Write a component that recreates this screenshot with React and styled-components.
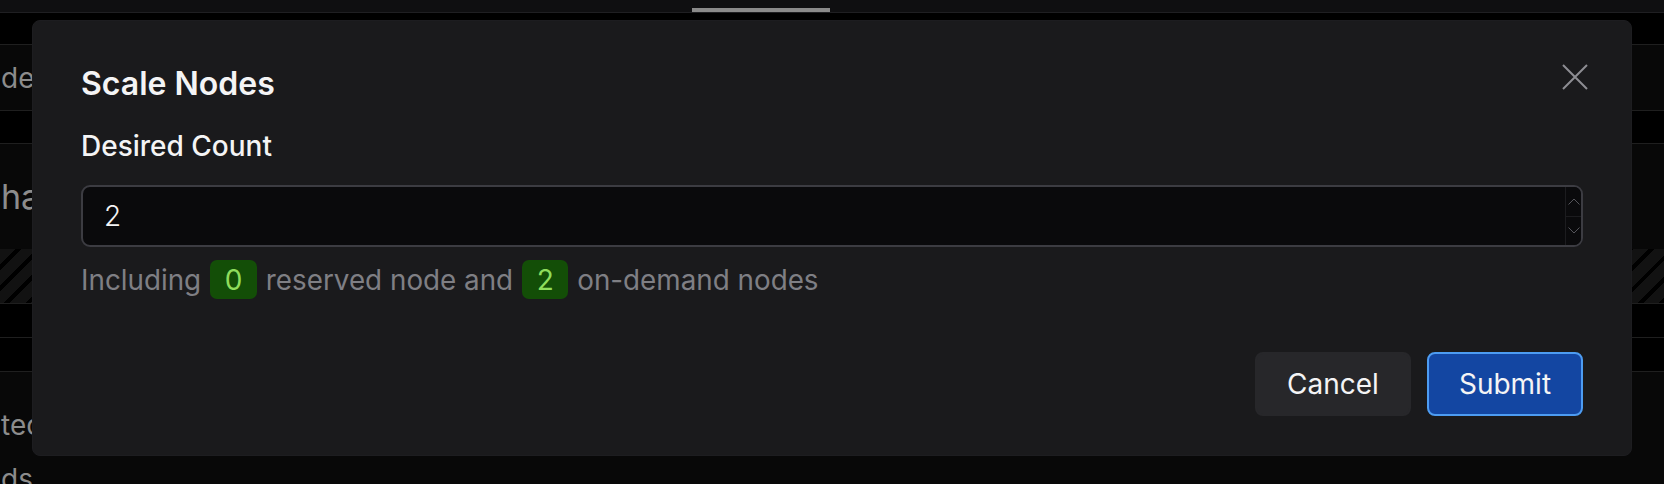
import React, { useState, useEffect, useRef } from 'react';
import styled, { createGlobalStyle } from 'styled-components';

const GlobalStyle = createGlobalStyle`
  * { box-sizing: border-box; }
  html, body {
    margin: 0;
    padding: 0;
    background: #000;
    font-family: Inter, "Noto Sans", "Liberation Sans", sans-serif;
    overflow: hidden;
  }
`;

const Page = styled.div`
  position: relative;
  width: 1664px;
  height: 484px;
  overflow: hidden;
  background: #000;
  display: flex;
  flex-direction: column;
`;

const TopBar = styled.div`
  height: 13px;
  flex: none;
  background: #0f0f11;
  border-bottom: 1px solid #1f1f22;
  display: flex;
  align-items: flex-end;
  padding-left: 692px;
`;

const Handle = styled.div`
  width: 138px;
  height: 4px;
  background: #8a8a8a;
`;

const Row = styled.div`
  flex: none;
  height: ${(p) => p.$h}px;
  background: ${(p) => (p.$tone === 'dark' ? '#080808' : '#000')};
  border-bottom: ${(p) => (p.$line ? '1px solid #1f1f1f' : 'none')};
  display: flex;
  align-items: center;
  color: #8c8c8c;
  font-size: ${(p) => p.$size || 28}px;
  padding-left: 1px;
`;

const Stripes = styled.div`
  flex: none;
  height: 55px;
  border-bottom: 1px solid #1f1f1f;
  background: repeating-linear-gradient(
    135deg,
    #121212 0 11px,
    #000 11px 15px
  );
`;

const LastRow = styled.div`
  flex: 1;
  background: #080808;
  display: flex;
  flex-direction: column;
  color: #8c8c8c;
  font-size: 28px;
  padding: 26px 0 0 1px;
  line-height: 54px;
`;

const Dialog = styled.div`
  position: absolute;
  top: 20px;
  left: 32px;
  width: 1600px;
  background: #1a1a1c;
  border: 1px solid #1d1d20;
  border-radius: 8px;
  padding: 43px 48px 39px;
  display: flex;
  flex-direction: column;
`;

const Header = styled.div`
  display: flex;
  justify-content: space-between;
  align-items: flex-start;
`;

const Title = styled.h2`
  margin: 0;
  font-size: 32px;
  line-height: 40px;
  font-weight: 600;
  color: #f4f4f5;
`;

const CloseButton = styled.button`
  background: none;
  border: none;
  padding: 0;
  margin: 0 -5px 0 0;
  width: 26px;
  height: 26px;
  cursor: pointer;
  display: flex;
`;

const Label = styled.label`
  margin-top: 25px;
  font-size: 28px;
  line-height: 34px;
  font-weight: 500;
  color: #f4f4f5;
`;

const InputBox = styled.div`
  margin-top: 22px;
  height: 62px;
  display: flex;
  background: #0a0a0c;
  border: 2px solid #3c3c42;
  border-radius: 9px;
  overflow: hidden;
`;

const Input = styled.input`
  flex: 1;
  min-width: 0;
  background: transparent;
  border: none;
  outline: none;
  color: #f4f4f5;
  caret-color: #f4f4f5;
  font-family: inherit;
  font-size: 28px;
  font-weight: 300;
  padding: 0 0 0 21px;
  -moz-appearance: textfield;
  &::-webkit-outer-spin-button,
  &::-webkit-inner-spin-button {
    -webkit-appearance: none;
    margin: 0;
  }
`;

const Spinner = styled.div`
  width: 16px;
  flex: none;
  display: flex;
  flex-direction: column;
  border-left: 1px solid #1c1c1f;
`;

const SpinStep = styled.button`
  flex: 1;
  background: #0a0a0c;
  border: none;
  border-top: ${(p) => (p.$down ? '1px solid #1c1c1f' : 'none')};
  padding: 0;
  display: flex;
  align-items: center;
  justify-content: center;
  cursor: pointer;
`;

const Helper = styled.div`
  margin-top: 13px;
  display: flex;
  align-items: center;
  gap: 9px;
  font-size: 27.8px;
  line-height: 34px;
  color: #7f7f84;
`;

const Badge = styled.span`
  height: 39px;
  padding: 0 14.5px;
  border-radius: 7px;
  background: #134e07;
  color: #8fdc5c;
  display: inline-flex;
  align-items: center;
  font-size: 28px;
`;

const Footer = styled.div`
  margin-top: 53px;
  display: flex;
  justify-content: flex-end;
  gap: 16px;
`;

const Button = styled.button`
  height: 64px;
  width: 156px;
  border-radius: 8px;
  font-family: inherit;
  font-size: 28px;
  color: #f4f4f5;
  cursor: pointer;
  border: 2px solid ${(p) => (p.$primary ? '#4d9cf2' : '#27272a')};
  background: ${(p) => (p.$primary ? '#1346a2' : '#27272a')};
`;

const Chevron = ({ up }) => (
  <svg width="12" height="7" viewBox="0 0 12 7" fill="none">
    <path
      d={up ? 'M0.5 6.5 L6 1 L11.5 6.5' : 'M0.5 0.5 L6 6 L11.5 0.5'}
      stroke="#55555b"
      strokeWidth="1"
    />
  </svg>
);

export default function App() {
  const [count, setCount] = useState('2');
  const inputRef = useRef(null);
  const reserved = 0;
  const n = Number(count) || 0;

  useEffect(() => {
    inputRef.current?.focus();
  }, []);

  return (
    <>
      <GlobalStyle />
      <Page>
        <TopBar>
          <Handle />
        </TopBar>
        <Row $h={32} $line />
        <Row $h={66} $tone="dark" $line>de</Row>
        <Row $h={33} $line />
        <Row $h={105} $tone="dark" $size={34}>ha</Row>
        <Stripes />
        <Row $h={34} $line />
        <Row $h={34} $line />
        <LastRow>
          <span>ted</span>
          <span>ds</span>
        </LastRow>

        <Dialog role="dialog">
          <Header>
            <Title>Scale Nodes</Title>
            <CloseButton aria-label="Close">
              <svg width="26" height="26" viewBox="0 0 26 26" fill="none">
                <path d="M1 1 L25 25 M25 1 L1 25" stroke="#8d8d92" strokeWidth="2" />
              </svg>
            </CloseButton>
          </Header>
          <Label htmlFor="count">Desired Count</Label>
          <InputBox>
            <Input
              id="count"
              ref={inputRef}
              type="number"
              value={count}
              autoFocus
              onChange={(e) => setCount(e.target.value)}
            />
            <Spinner>
              <SpinStep onClick={() => setCount(String(n + 1))}>
                <Chevron up />
              </SpinStep>
              <SpinStep $down onClick={() => setCount(String(Math.max(0, n - 1)))}>
                <Chevron />
              </SpinStep>
            </Spinner>
          </InputBox>
          <Helper>
            Including <Badge>{reserved}</Badge> reserved node and{' '}
            <Badge>{Math.max(0, n - reserved)}</Badge> on-demand nodes
          </Helper>
          <Footer>
            <Button>Cancel</Button>
            <Button $primary>Submit</Button>
          </Footer>
        </Dialog>
      </Page>
    </>
  );
}
